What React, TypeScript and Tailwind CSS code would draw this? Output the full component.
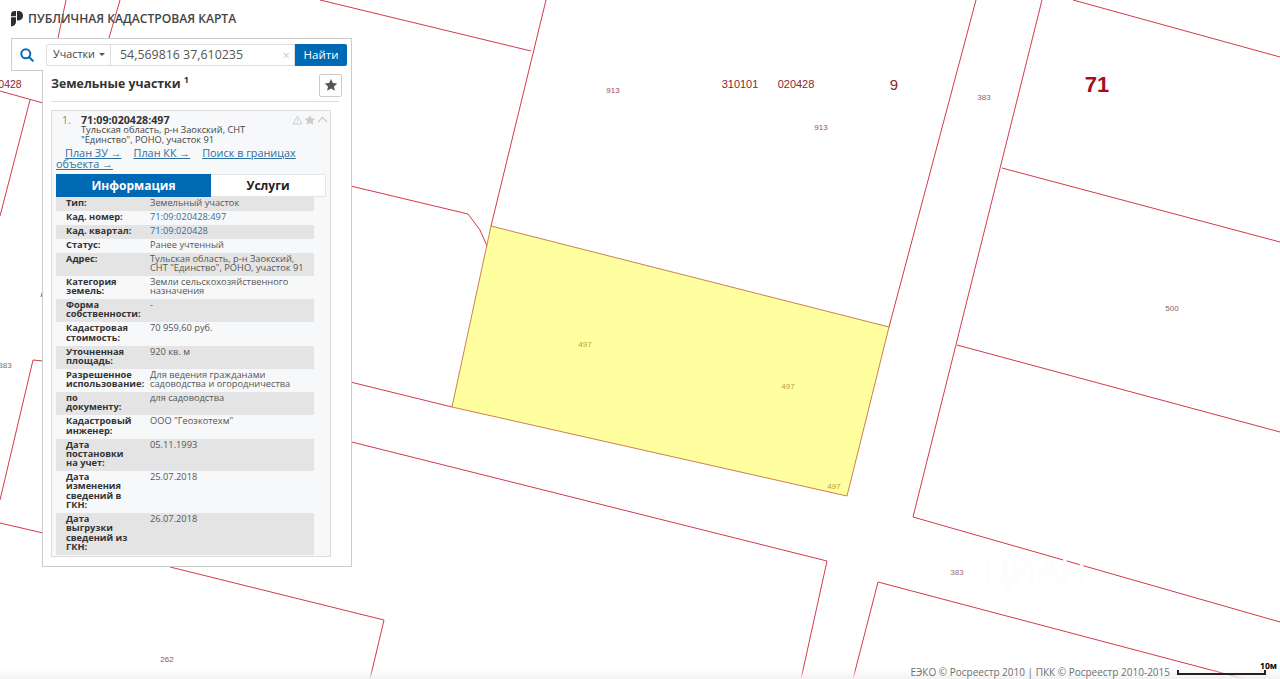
const LINE = "#d23a4a";

const mapLines = [
  "320,0 531,51",
  "546,0 491,226",
  "200,150 468,214 480,230 487,246",
  "976,0 889,327",
  "1042,0 913,517 1280,622",
  "1002,168 1280,242",
  "1073,0 1280,57",
  "957,345 1280,432",
  "853,679 878,582 1245,679",
  "200,345 452,407",
  "200,404 827,561 801,679",
  "170,567 384,620 370,679",
  "0,91 43,103",
  "30,100 0,216",
  "41,297 43,290",
  "43,361 33,360 0,500",
  "0,523 43,533",
  "66,0 58,38",
  "120,0 109,38",
];

const labels: [number, number, string, number, string][] = [
  [613, 93, "913", 8, "#9a4a5c"],
  [821, 130, "913", 8, "#9a4a5c"],
  [984, 100, "383", 8, "#8a6a70"],
  [1172, 311, "500", 8, "#8a5a60"],
  [957, 575, "383", 8, "#a06a74"],
  [167, 662, "262", 8, "#9a4a5c"],
  [585, 347, "497", 8, "#b8a040"],
  [788, 389, "497", 8, "#b8a040"],
  [834, 489, "497", 8, "#b8a040"],
  [740, 88, "310101", 11, "#8a2630"],
  [796, 88, "020428", 11, "#8a2630"],
  [894, 90, "9", 15, "#8a2630"],
  [10, 88, "0428", 10.5, "#8a2630"],
  [5, 368, "383", 8, "#8a6a70"],
];

const rows: [string[], string[], boolean?][] = [
  [["Тип:"], ["Земельный участок"]],
  [["Кад. номер:"], ["71:09:020428:497"], true],
  [["Кад. квартал:"], ["71:09:020428"], true],
  [["Статус:"], ["Ранее учтенный"]],
  [["Адрес:"], ["Тульская область, р-н Заокский,", "СНТ \"Единство\", РОНО, участок 91"]],
  [["Категория", "земель:"], ["Земли сельскохозяйственного", "назначения"]],
  [["Форма", "собственности:"], ["-"]],
  [["Кадастровая", "стоимость:"], ["70 959,60 руб."]],
  [["Уточненная", "площадь:"], ["920 кв. м"]],
  [["Разрешенное", "использование:"], ["Для ведения гражданами", "садоводства и огородничества"]],
  [["по", "документу:"], ["для садоводства"]],
  [["Кадастровый", "инженер:"], ["ООО \"Геоэкотехм\""]],
  [["Дата", "постановки", "на учет:"], ["05.11.1993"]],
  [["Дата", "изменения", "сведений в", "ГКН:"], ["25.07.2018"]],
  [["Дата", "выгрузки", "сведений из", "ГКН:"], ["26.07.2018"]],
];

function MapLayer() {
  return (
    <svg className="absolute inset-0" width="1280" height="679" viewBox="0 0 1280 679" style={{ fontFamily: "'Liberation Sans', sans-serif" }}>
      <polygon points="491,226 889,327 847,496 452,407" fill="#ffff9f" />
      {mapLines.map((p) => (
        <polyline key={p} points={p} fill="none" stroke={LINE} strokeWidth="1" />
      ))}
      <polygon points="491,226 889,327 847,496 452,407" fill="none" stroke="#c8703c" strokeWidth="0.9" />
      {labels.map(([x, y, t, s, c]) => (
        <text key={x + t} x={x} y={y} fontSize={s} fill={c} textAnchor="middle">{t}</text>
      ))}
      <text x="1097" y="92" fontSize="22" fontWeight="700" fill="#a01020" textAnchor="middle">71</text>
      <text x="1035" y="583" fontSize="36" fill="#fdfdfd" textAnchor="middle">ЦИАН</text>
    </svg>
  );
}

function Logo() {
  return (
    <svg width="12" height="16" viewBox="0 0 12 16" fill="#2e2e2e">
      <path d="M0 3.500C0 1.400 1.500 0 3.500 0H5v5.200H0z" />
      <path d="M6 0h1.200C10 0 12 2.100 12 4.700 12 7.300 10 9.400 7.200 9.400H6z" />
      <path d="M0 6.200h5v4.400C5 13.400 3 15.500 0 15.500z" />
    </svg>
  );
}

function Star({ size, color }: { size: number; color: string }) {
  return (
    <svg width={size} height={size} viewBox="0 0 24 24" fill={color}>
      <path d="M12 1.500l3.200 7 7.600.8-5.700 5.100 1.600 7.500L12 18.100 5.300 21.900l1.600-7.500L1.200 9.300l7.600-.8z" />
    </svg>
  );
}

export default function App() {
  return (
    <div
      className="relative w-[1280px] h-[679px] overflow-hidden bg-white text-[#333]"
      style={{ fontFamily: "'Open Sans', 'Noto Sans', sans-serif" }}
    >
      <MapLayer />

      <div className="absolute left-[11px] top-[11px] flex items-center gap-[5px] h-[16px]">
        <Logo />
        <span className="text-[12.100px] font-semibold text-[#444] leading-none whitespace-nowrap">ПУБЛИЧНАЯ КАДАСТРОВАЯ КАРТА</span>
      </div>

      <div className="absolute left-[11px] top-[38px] w-[341px] h-[33px] bg-white border border-[#ccc] flex items-center pl-[8px] pr-[4px]">
        <svg width="14" height="14" viewBox="0 0 14 14" fill="none" stroke="#0a6bb0" strokeWidth="2" strokeLinecap="round">
          <circle cx="5.800" cy="5.800" r="4.500" />
          <path d="M9.200 9.200l3.600 3.600" />
        </svg>
        <div className="ml-[12px] flex flex-1 h-[22px] border border-[#ddd] rounded-l-[2px]">
          <div className="w-[64px] flex items-center gap-[4px] pl-[6px] border-r border-[#ddd] text-[10.800px] text-[#444]">
            Участки
            <span className="w-0 h-0 border-x-[3px] border-x-transparent border-t-[3px] border-t-[#555]" />
          </div>
          <div className="flex-1 flex items-center justify-between pl-[9px] pr-[4px] pt-[1px] text-[12.400px] text-[#555]">
            <span>54,569816 37,610235</span>
            <span className="text-[13px] leading-none text-[#ccc]">×</span>
          </div>
        </div>
        <div className="w-[52px] h-[22px] flex items-center justify-center bg-[#0069b4] text-white text-[11.500px] rounded-r-[2px]">Найти</div>
      </div>

      <div className="absolute left-[42px] top-[70px] w-[310px] h-[497px] bg-white border border-[#ccc] border-t-0 pl-[8px]">
        <div className="flex items-center justify-between h-[32px] mr-[12px] border-b border-[#ddd]">
          <div className="text-[12.300px] font-bold text-[#333] leading-none -mt-[3px] whitespace-nowrap">
            Земельные участки <sup className="text-[9px] -top-[5px]">1</sup>
          </div>
          <div className="w-[23px] h-[23px] mr-[-3px] -mt-[1px] flex items-center justify-center bg-white border border-[#ccc] rounded-[2px]">
            <Star size={14} color="#555" />
          </div>
        </div>

        <div className="mt-[8px] w-[280px] h-[447px] bg-[#f7f8fa] border border-[#ddd] relative pl-[4px]">
          <div className="absolute right-[2px] top-[3px] flex items-center gap-[1px]">
            <svg width="11" height="10" viewBox="0 0 11 10" fill="none" stroke="#ccc" strokeWidth="1">
              <path d="M5.500 1L10 9H1z" />
              <path d="M5.500 4v2.500M5.500 7.200v.8" />
            </svg>
            <Star size={12} color="#ccc" />
            <svg width="11" height="8" viewBox="0 0 11 8" fill="none" stroke="#ccc" strokeWidth="1.300">
              <path d="M1 6l4.500-4.500L10 6" />
            </svg>
          </div>

          <div className="flex pt-[4px] pl-[6px] h-[34px]">
            <div className="w-[19px] text-[10.500px] text-[#888] leading-[10px]">1.</div>
            <div>
              <div className="text-[10.700px] font-bold text-[#333] leading-[10px]">71:09:020428:497</div>
              <div className="text-[9.250px] text-[#444] leading-[9.500px]">Тульская область, р-н Заокский, СНТ</div>
              <div className="text-[9.250px] text-[#444] leading-[9.500px]">"Единство", РОНО, участок 91</div>
            </div>
          </div>

          <div className="h-[29px] text-[10.850px] leading-[11px] text-[#2d6f9f] pt-[2px]">
            <div className="pl-[9px] flex gap-[12px]">
              <span className="underline">План ЗУ →</span>
              <span className="underline">План КК →</span>
              <span className="underline">Поиск в границах</span>
            </div>
            <div><span className="underline">объекта →</span></div>
          </div>

          <div className="flex w-[270px] h-[23px] bg-white border border-[#e5e5e5] text-[12px] font-bold leading-none">
            <div className="w-[155px] -ml-px -my-px flex items-center justify-center bg-[#0069b4] text-white">Информация</div>
            <div className="flex-1 flex items-center justify-center text-[#222]">Услуги</div>
          </div>

          <div className="w-[258px] text-[9.280px] leading-[9.330px]">
            {rows.map(([label, value, link], i) => (
              <div key={label.join()} className={`flex pl-[10px] pt-[1px] pb-[3.580px] ${i % 2 === 0 ? "bg-[#e4e4e4]" : ""}`}>
                <div className="w-[84px] font-bold text-[#333] shrink-0">
                  {label.map((l) => <div key={l}>{l}</div>)}
                </div>
                <div className={link ? "text-[#2d6f9f]" : "text-[#555]"}>
                  {value.map((l) => <div key={l}>{l}</div>)}
                </div>
              </div>
            ))}
          </div>
        </div>
      </div>

      <div className="absolute left-0 right-0 bottom-0 h-[10px] bg-gradient-to-b from-transparent to-[#f2f2f2]" />

      <div className="absolute right-0 bottom-0 h-[14px] pr-[2px] flex items-center gap-[7px]">
        <span className="text-[10px] text-[#6f6f6f] leading-none whitespace-nowrap">ЕЭКО © Росреестр 2010 | ПКК © Росреестр 2010-2015</span>
        <div className="relative w-[89px] h-[5px] border-x-2 border-b-2 border-[#222] mr-[12px]">
          <span className="absolute -right-[13px] -top-[8px] text-[8.500px] font-bold text-black leading-none">10м</span>
        </div>
      </div>
    </div>
  );
}
